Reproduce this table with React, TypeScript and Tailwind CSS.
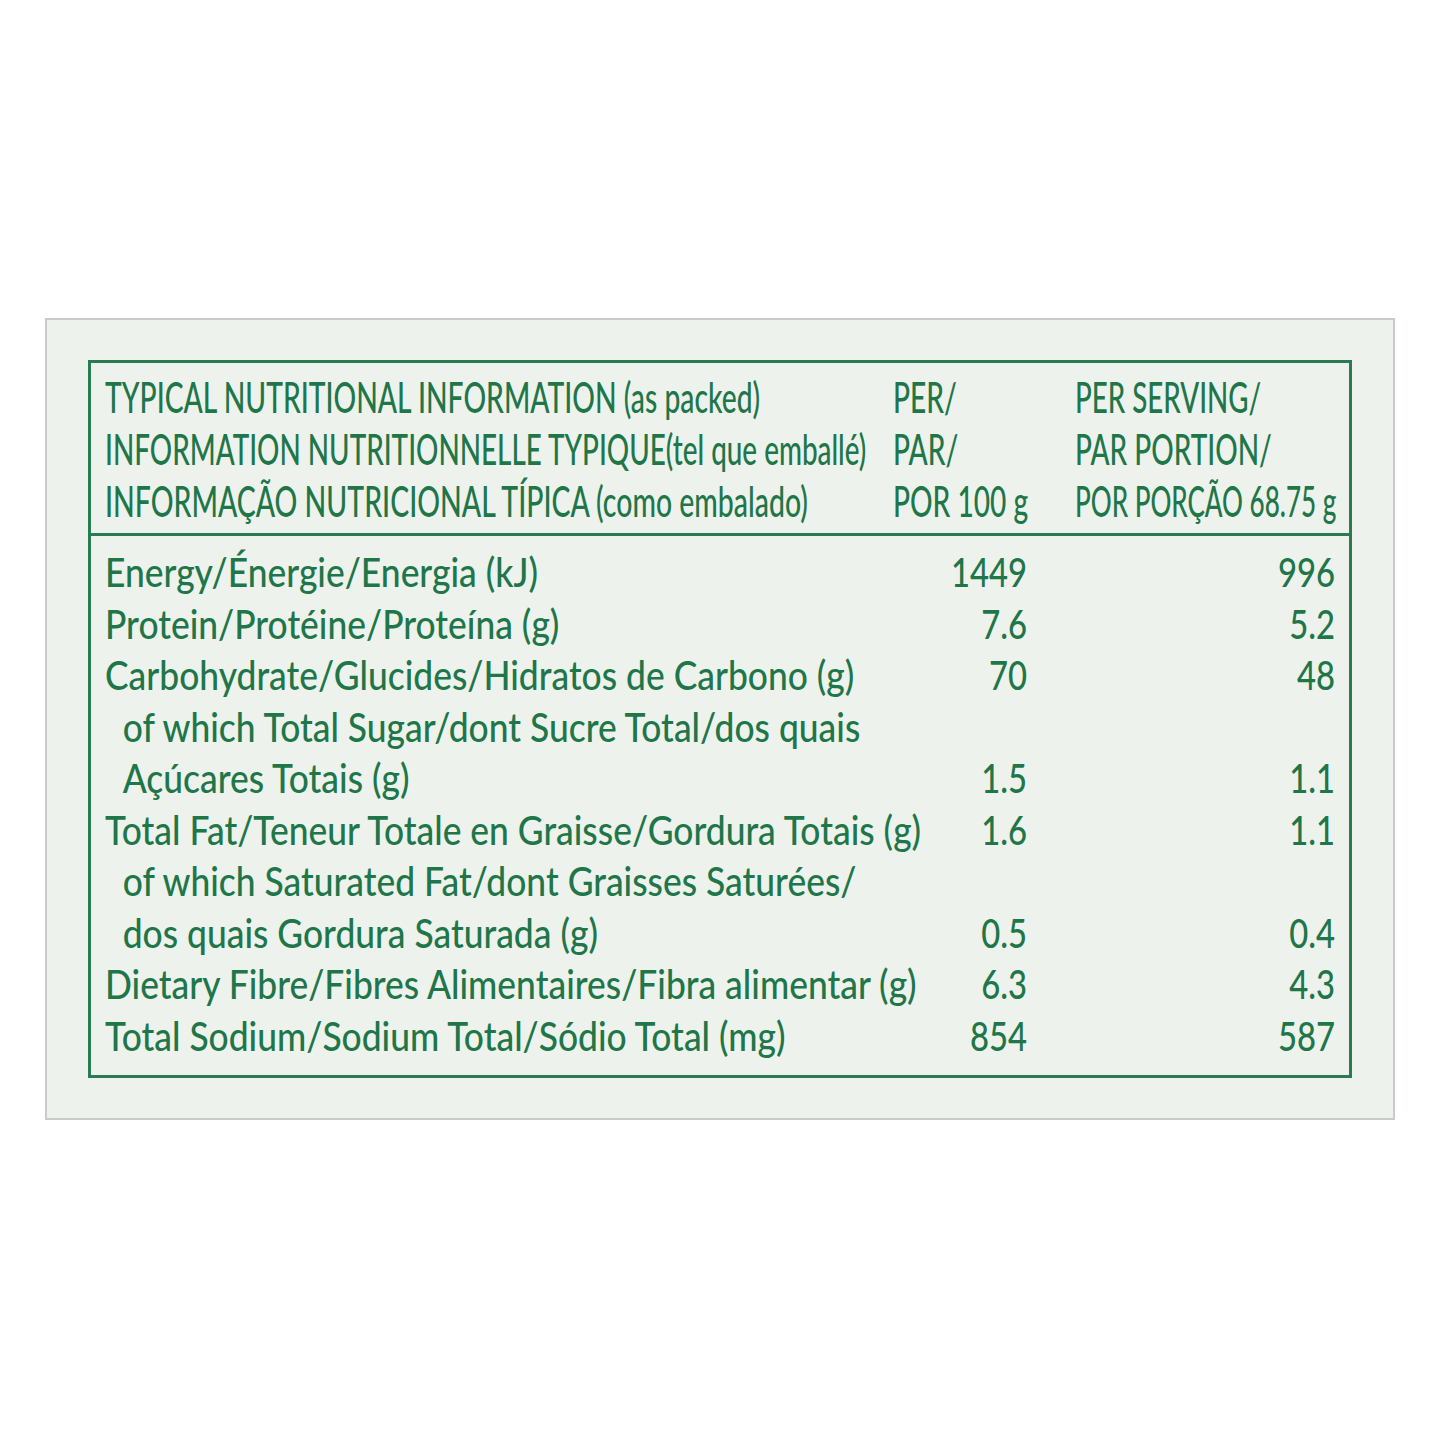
import React from "react";

const rows: { label: string; indent?: boolean; a?: string; b?: string }[] = [
  { label: "Energy/Énergie/Energia (kJ)", a: "1449", b: "996" },
  { label: "Protein/Protéine/Proteína (g)", a: "7.6", b: "5.2" },
  { label: "Carbohydrate/Glucides/Hidratos de Carbono (g)", a: "70", b: "48" },
  { label: "of which Total Sugar/dont Sucre Total/dos quais", indent: true },
  { label: "Açúcares Totais (g)", indent: true, a: "1.5", b: "1.1" },
  { label: "Total Fat/Teneur Totale en Graisse/Gordura Totais (g)", a: "1.6", b: "1.1" },
  { label: "of which Saturated Fat/dont Graisses Saturées/", indent: true },
  { label: "dos quais Gordura Saturada (g)", indent: true, a: "0.5", b: "0.4" },
  { label: "Dietary Fibre/Fibres Alimentaires/Fibra alimentar (g)", a: "6.3", b: "4.3" },
  { label: "Total Sodium/Sodium Total/Sódio Total (mg)", a: "854", b: "587" },
];

const header: [string, string, string][] = [
  ["TYPICAL NUTRITIONAL INFORMATION (as packed)", "PER/", "PER SERVING/"],
  ["INFORMATION NUTRITIONNELLE TYPIQUE(tel que emballé)", "PAR/", "PAR PORTION/"],
  ["INFORMAÇÃO NUTRICIONAL TÍPICA (como embalado)", "POR 100 g", "POR PORÇÃO 68.75 g"],
];

const col1Scale = [
  "block whitespace-nowrap origin-left scale-x-[0.673]",
  "block whitespace-nowrap origin-left scale-x-[0.663]",
  "block whitespace-nowrap origin-left scale-x-[0.677]",
];
const col3Scale = [
  "block whitespace-nowrap origin-left scale-x-[0.66]",
  "block whitespace-nowrap origin-left scale-x-[0.666]",
  "block whitespace-nowrap origin-left scale-x-[0.62]",
];

export default function App() {
  return (
    <div
      className="min-h-[1440px] w-full bg-white flex justify-center pt-[318px]"
      style={{ fontFamily: "Lato, 'Open Sans', sans-serif" }}
    >
      <div className="w-[1350px] h-[802px] bg-[#eef2ed] border-2 border-[#c9cbc9] pt-[40px] pl-[41px] pr-[41px]">
        <div className="w-[1264px] h-[718px] border-[3px] border-[#2a7a52] text-[#1e7649] font-medium flex flex-col">
          {/* Header */}
          <div className="pt-[8px] pb-[6px] pl-[14px] pr-[14px] border-b-[3px] border-[#2a7a52]">
            {header.map((h, i) => (
              <div key={i} className="grid grid-cols-[788px_182px_260px] h-[52px] items-center text-[42px] leading-[52px]">
                <span className={col1Scale[i]}>{h[0]}</span>
                <span className="block whitespace-nowrap origin-left scale-x-[0.67]">{h[1]}</span>
                <span className={col3Scale[i]}>{h[2]}</span>
              </div>
            ))}
          </div>
          {/* Body */}
          <div className="pt-[11px] pl-[14px] pr-[14px]">
            {rows.map((r, i) => (
              <div key={i} className="grid grid-cols-[812px_110px_308px] h-[51.5px] items-center text-[40px] leading-[51.5px]">
                <span
                  className={
                    r.indent
                      ? "block whitespace-nowrap origin-left scale-x-[0.885] pl-[20px]"
                      : "block whitespace-nowrap origin-left scale-x-[0.885]"
                  }
                >
                  {r.label}
                </span>
                <span className="block text-right whitespace-nowrap origin-right scale-x-[0.82]">{r.a ?? ""}</span>
                <span className="block text-right whitespace-nowrap origin-right scale-x-[0.82]">{r.b ?? ""}</span>
              </div>
            ))}
          </div>
        </div>
      </div>
    </div>
  );
}
